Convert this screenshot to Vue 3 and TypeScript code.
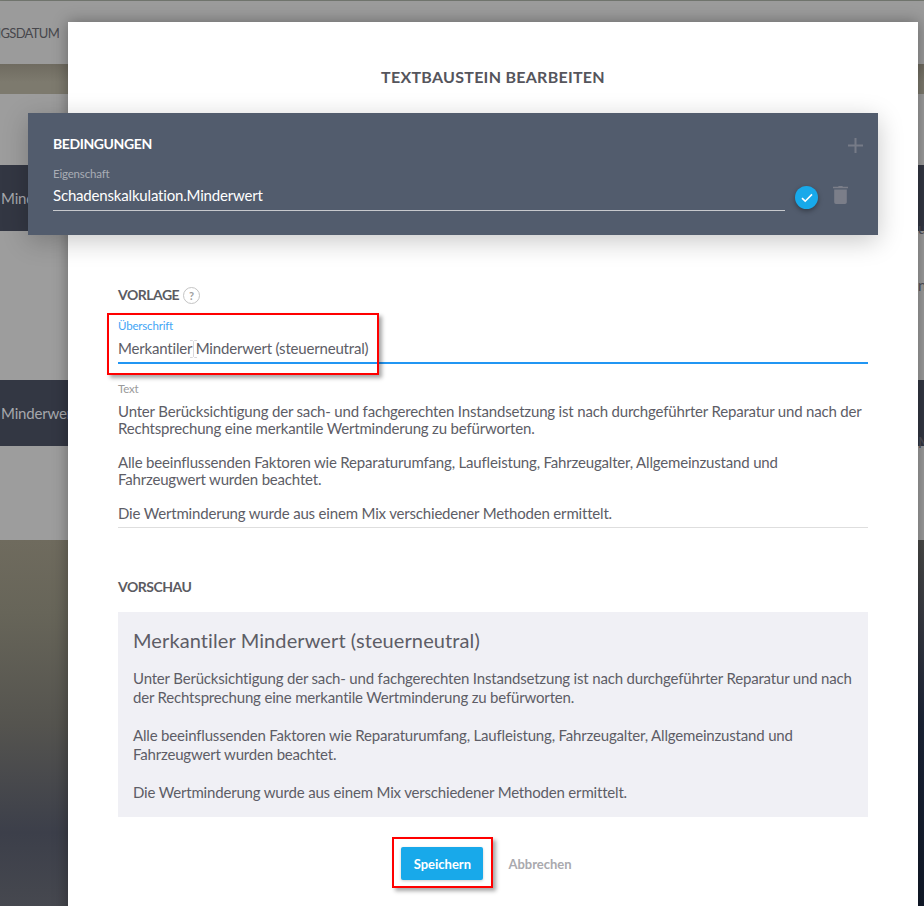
<script setup lang="ts">
const paragraphs = [
  'Unter Berücksichtigung der sach- und fachgerechten Instandsetzung ist nach durchgeführter Reparatur und nach der Rechtsprechung eine merkantile Wertminderung zu befürworten.',
  'Alle beeinflussenden Faktoren wie Reparaturumfang, Laufleistung, Fahrzeugalter, Allgemeinzustand und Fahrzeugwert wurden beachtet.',
  'Die Wertminderung wurde aus einem Mix verschiedener Methoden ermittelt.',
]
const title = 'Merkantiler Minderwert (steuerneutral)'
</script>

<template>
  <div class="page">
    <div class="backdrop">
      <div class="bg-header"><span class="bg-header-text">NGSDATUM</span></div>
      <div class="bg-band"></div>
      <div class="bg-panel">
        <div class="bg-tile first"><span>Minderwert</span></div>
        <div class="bg-tile second"><span>Minderwert</span></div>
      </div>
      <div class="bg-photo"></div>
    </div>

    <!-- what is left of the page behind the dialog, right of it -->
    <span class="peek peek-a">u</span>
    <span class="peek peek-b">n</span>
    <span class="peek peek-c">Mi</span>

    <div class="modal">
      <h1 class="modal-title">TEXTBAUSTEIN BEARBEITEN</h1>

      <section class="conditions">
        <div class="conditions-head">
          <h2>BEDINGUNGEN</h2>
          <svg class="plus" width="15" height="15" viewBox="0 0 15 15">
            <path d="M6.5 0h2v6.5H15v2H8.5V15h-2V8.5H0v-2h6.5z" fill="#767b87" />
          </svg>
        </div>
        <div class="condition-row">
          <div class="condition-field">
            <label>Eigenschaft</label>
            <div class="condition-value">Schadenskalkulation.Minderwert</div>
          </div>
          <span class="check">
            <svg width="12" height="10" viewBox="0 0 12 10">
              <path d="M1 5.2l3.2 3L11 1.4" fill="none" stroke="#fff" stroke-width="1.6" />
            </svg>
          </span>
          <svg class="trash" width="15" height="18" viewBox="0 0 15 18">
            <path d="M5 .8 5.8 0h3.4l.8.8h5v1.5H0V.8z M1.2 3.4h12.6v12.8q0 1.8-1.8 1.8H3q-1.8 0-1.8-1.8z" fill="#7b7e89" />
          </svg>
        </div>
      </section>

      <div class="section-title template-title">
        VORLAGE <span class="help">?</span>
      </div>

      <div class="field active">
        <label>Überschrift</label>
        <div class="field-value">{{ title }}</div>
      </div>

      <div class="field text-field">
        <label>Text</label>
        <div class="field-value">
          <p v-for="p in paragraphs" :key="p">{{ p }}</p>
        </div>
      </div>

      <div class="section-title preview-title">VORSCHAU</div>

      <div class="preview">
        <h3>{{ title }}</h3>
        <p v-for="p in paragraphs" :key="p">{{ p }}</p>
      </div>

      <div class="actions">
        <button class="save" type="button">Speichern</button>
        <button class="cancel" type="button">Abbrechen</button>
      </div>
    </div>

    <div class="marker marker-title"></div>
    <div class="marker marker-save"></div>

    <svg class="cursor" width="7" height="18" viewBox="0 0 7 18">
      <path d="M0 .5h2.5L3.5 1.5 4.5.5H7M3.5 1.5v15M0 17.5h2.5l1-1 1 1H7" fill="none" stroke="#d8d8dc" />
    </svg>
  </div>
</template>

<style>
html, body {
  margin: 0;
  overflow: hidden;
}
</style>

<style scoped>
.page {
  position: relative;
  width: 924px;
  height: 906px;
  overflow: hidden;
  font-family: Lato, "Noto Sans", sans-serif;
  letter-spacing: -0.18px;
  color: #5d5d66;
}

.backdrop {
  display: flex;
  flex-direction: column;
  height: 100%;
  border-top: 1px solid #777b73;
  box-sizing: border-box;
}

.bg-header {
  height: 63px;
  flex: none;
  background: #9b9b9b;
  box-shadow: 0 2px 6px rgba(0, 0, 0, 0.25);
}

.bg-header-text {
  display: block;
  width: 59px;
  overflow: hidden;
  direction: rtl;
  white-space: nowrap;
  padding-top: 23px;
  font-size: 13px;
  letter-spacing: -0.7px;
  line-height: 18px;
  color: #47474c;
}

.bg-band {
  height: 30px;
  flex: none;
  background: linear-gradient(#6f6b60, #7d7a6e 60%);
}

.bg-panel {
  height: 446px;
  flex: none;
  background: #9d9d9d;
  display: flex;
  flex-direction: column;
}

.bg-tile {
  height: 66px;
  flex: none;
  background: #333743;
  color: #a6a8ac;
  font-size: 15px;
  display: flex;
  align-items: center;
  padding-left: 1px;
}

.bg-tile span {
  overflow: hidden;
  white-space: nowrap;
}

.bg-tile.first {
  margin-top: 71px;
}

.bg-tile.first span {
  width: 27px;
}

.bg-tile.second {
  margin-top: 149px;
}

.bg-tile.second span {
  width: 67px;
}

.bg-photo {
  flex: 1;
  background:
    linear-gradient(#6f6b5e 0, #676559 20%, #55544f 50%, #3c3f4a 80%, #46484f 100%) left / 50% 100% no-repeat,
    linear-gradient(#4a4a48 0, #3a3c44 20%, #1c2538 50%, #111a2a 100%) right / 50% 100% no-repeat;
}

.peek {
  position: absolute;
  left: 918px;
  width: 6px;
  overflow: hidden;
  font-size: 15px;
  line-height: 18px;
  color: #50505a;
}

.peek-a {
  top: 219px;
}

.peek-b {
  top: 276px;
}

.peek-c {
  top: 433px;
}

.modal {
  position: absolute;
  left: 68px;
  top: 22px;
  width: 850px;
  height: 900px;
  box-sizing: border-box;
  padding: 0 50px;
  background: #fff;
  box-shadow: 0 0 14px rgba(0, 0, 0, 0.35);
}

.modal-title {
  margin: 0;
  padding-top: 44px;
  height: 91px;
  box-sizing: border-box;
  text-align: center;
  font-size: 16px;
  line-height: 22px;
  font-weight: 700;
  letter-spacing: 0.28px;
  color: #55555c;
}

.conditions {
  margin: 0 -10px 0 -90px;
  height: 122px;
  box-sizing: border-box;
  padding: 20px 15px 0 25px;
  background: #525c6d;
  box-shadow: 0 6px 24px rgba(0, 0, 0, 0.22);
  color: #fff;
}

.conditions-head {
  display: flex;
  justify-content: space-between;
  align-items: center;
  height: 22px;
}

.conditions-head h2 {
  margin: 0;
  font-size: 14px;
  letter-spacing: -0.4px;
  line-height: 20px;
  font-weight: 700;
}

.plus {
  margin-top: 2px;
}

.condition-row {
  display: flex;
  align-items: flex-start;
  margin-top: 11px;
}

.condition-field {
  flex: none;
  width: 732px;
  height: 44px;
  border-bottom: 1px solid #c7c9cd;
}

.condition-field label {
  display: block;
  font-size: 11.5px;
  line-height: 15px;
  color: #a9adb5;
}

.condition-value {
  margin-top: 4px;
  font-size: 15px;
  line-height: 20px;
}

.check {
  flex: none;
  margin: 20px 0 0 10px;
  width: 23px;
  height: 23px;
  border-radius: 50%;
  background: #18a9ea;
  box-shadow: 0 2px 5px rgba(0, 0, 0, 0.35);
  display: flex;
  align-items: center;
  justify-content: center;
}

.trash {
  flex: none;
  margin: 20px 0 0 15px;
}

.section-title {
  font-size: 14px;
  letter-spacing: -0.5px;
  line-height: 20px;
  font-weight: 700;
  color: #5b5b62;
}

.template-title {
  margin-top: 50px;
  display: flex;
  align-items: center;
  gap: 4px;
}

.help {
  width: 15px;
  height: 15px;
  border: 1px solid #c4c4c4;
  border-radius: 50%;
  font-size: 11px;
  letter-spacing: 0;
  line-height: 15px;
  text-align: center;
  color: #a0a0a0;
}

.field label {
  display: block;
  font-size: 11.5px;
  line-height: 14px;
  color: #9a9a9a;
}

.field.active {
  margin-top: 14px;
  height: 43px;
  border-bottom: 2px solid #2196f3;
}

.field.active label {
  color: #42a5f5;
}

.field.active .field-value {
  margin-top: 7px;
}

.field-value {
  font-size: 15px;
  line-height: 17px;
  color: #5d5d66;
}

.text-field {
  margin-top: 18px;
  padding-bottom: 5px;
  border-bottom: 1px solid #dedede;
}

.text-field .field-value {
  margin-top: 7px;
}

.text-field p {
  margin: 0 0 17px;
}

.text-field p:last-child {
  margin: 0;
}

.preview-title {
  margin-top: 49px;
}

.preview {
  margin-top: 15px;
  box-sizing: border-box;
  height: 205px;
  padding: 15px 15px 0;
  background: #f0f0f5;
  font-size: 15px;
  line-height: 19px;
}

.preview h3 {
  margin: 0 0 15px;
  font-size: 20px;
  letter-spacing: 0.1px;
  line-height: 27px;
  font-weight: 400;
  color: #5d5d66;
}

.preview p {
  margin: 0 0 19px;
}

.actions {
  margin-top: 30px;
  padding-right: 13px;
  display: flex;
  justify-content: center;
  align-items: center;
  gap: 25px;
}

.save {
  width: 82px;
  height: 33px;
  border: 0;
  border-radius: 2px;
  background: #18a9ea;
  box-shadow: 0 1px 3px rgba(0, 0, 0, 0.2);
  color: #fff;
  font: 700 13px Lato, "Noto Sans", sans-serif;
}

.cancel {
  border: 0;
  padding: 0;
  background: none;
  color: #a9a9ae;
  font: 700 13px Lato, "Noto Sans", sans-serif;
}

.marker {
  position: absolute;
  box-sizing: border-box;
  border: 2px solid #f00;
  box-shadow: 3px 3px 4px rgba(0, 0, 0, 0.35);
}

.marker-title {
  left: 107px;
  top: 313px;
  width: 272px;
  height: 62px;
}

.marker-save {
  left: 392px;
  top: 837px;
  width: 101px;
  height: 51px;
}

.cursor {
  position: absolute;
  left: 190px;
  top: 340px;
}
</style>
